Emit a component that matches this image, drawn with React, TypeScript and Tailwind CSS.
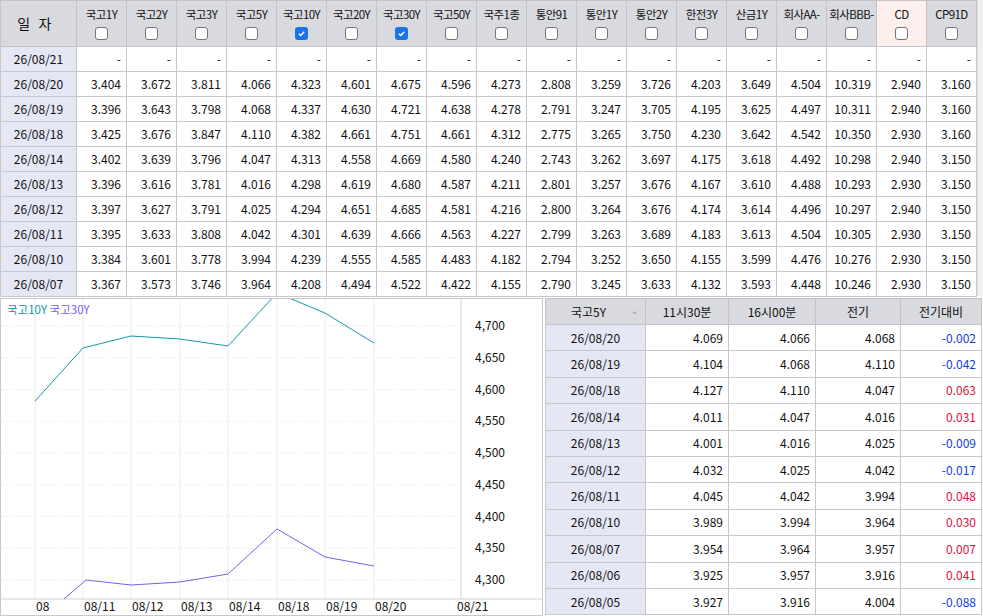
import React from 'react';

const cols = ['국고1Y','국고2Y','국고3Y','국고5Y','국고10Y','국고20Y','국고30Y','국고50Y','국주1종','통안91','통안1Y','통안2Y','한전3Y','산금1Y','회사AA-','회사BBB-','CD','CP91D'];
const checked = [4, 6];

const rows: [string, string[]][] = [
  ['26/08/21', Array(18).fill('-')],
  ['26/08/20', '3.404 3.672 3.811 4.066 4.323 4.601 4.675 4.596 4.273 2.808 3.259 3.726 4.203 3.649 4.504 10.319 2.940 3.160'.split(' ')],
  ['26/08/19', '3.396 3.643 3.798 4.068 4.337 4.630 4.721 4.638 4.278 2.791 3.247 3.705 4.195 3.625 4.497 10.311 2.940 3.160'.split(' ')],
  ['26/08/18', '3.425 3.676 3.847 4.110 4.382 4.661 4.751 4.661 4.312 2.775 3.265 3.750 4.230 3.642 4.542 10.350 2.930 3.160'.split(' ')],
  ['26/08/14', '3.402 3.639 3.796 4.047 4.313 4.558 4.669 4.580 4.240 2.743 3.262 3.697 4.175 3.618 4.492 10.298 2.940 3.150'.split(' ')],
  ['26/08/13', '3.396 3.616 3.781 4.016 4.298 4.619 4.680 4.587 4.211 2.801 3.257 3.676 4.167 3.610 4.488 10.293 2.930 3.150'.split(' ')],
  ['26/08/12', '3.397 3.627 3.791 4.025 4.294 4.651 4.685 4.581 4.216 2.800 3.264 3.676 4.174 3.614 4.496 10.297 2.940 3.150'.split(' ')],
  ['26/08/11', '3.395 3.633 3.808 4.042 4.301 4.639 4.666 4.563 4.227 2.799 3.263 3.689 4.183 3.613 4.504 10.305 2.930 3.150'.split(' ')],
  ['26/08/10', '3.384 3.601 3.778 3.994 4.239 4.555 4.585 4.483 4.182 2.794 3.252 3.650 4.155 3.599 4.476 10.276 2.930 3.150'.split(' ')],
  ['26/08/07', '3.367 3.573 3.746 3.964 4.208 4.494 4.522 4.422 4.155 2.790 3.245 3.633 4.132 3.593 4.448 10.246 2.930 3.150'.split(' ')],
];

const sub: string[][] = [
  ['26/08/20','4.069','4.066','4.068','-0.002'],
  ['26/08/19','4.104','4.068','4.110','-0.042'],
  ['26/08/18','4.127','4.110','4.047','0.063'],
  ['26/08/14','4.011','4.047','4.016','0.031'],
  ['26/08/13','4.001','4.016','4.025','-0.009'],
  ['26/08/12','4.032','4.025','4.042','-0.017'],
  ['26/08/11','4.045','4.042','3.994','0.048'],
  ['26/08/10','3.989','3.994','3.964','0.030'],
  ['26/08/07','3.954','3.964','3.957','0.007'],
  ['26/08/06','3.925','3.957','3.916','0.041'],
  ['26/08/05','3.927','3.916','4.004','-0.088'],
];

const Box = ({ on }: { on: boolean }) =>
  on ? (
    <span className="w-[13px] h-[13px] rounded-[3px] bg-[#1a73e8] flex items-center justify-center">
      <svg viewBox="0 0 10 10" className="w-[9px] h-[9px]"><path d="M2 5.2 4.2 7.2 8 3" fill="none" stroke="white" strokeWidth="1.6" /></svg>
    </span>
  ) : (
    <span className="w-[13px] h-[13px] rounded-[3px] border border-[#767676] bg-white" />
  );

const cyan = [[34,400],[82,347],[130,335],[179,338],[227,345],[276,292],[324,312],[373,342]];
const purple = [[63,598],[85,579],[130,584],[179,581],[227,573],[276,528],[324,556],[373,565]];
const yl = ['4,700','4,650','4,600','4,550','4,500','4,450','4,400','4,350','4,300'];
const xl: [number, string][] = [[34,'08'],[82,'08/11'],[130,'08/12'],[179,'08/13'],[227,'08/14'],[276,'08/18'],[324,'08/19'],[373,'08/20'],[455,'08/21']];
const step = 31.75;

export default function App() {
  return (
    <div className="w-[983px] h-[616px] bg-white overflow-hidden text-[12px] text-[#111]" style={{ fontFamily: '"Noto Sans CJK KR", "DejaVu Sans", sans-serif' }}>
      <div className="flex h-[296px]">
        <table className="border-collapse table-fixed w-[976px]">
          <colgroup><col className="w-[76px]" />{cols.map(c => <col key={c} className="w-[50px]" />)}</colgroup>
          <thead>
            <tr className="h-[46px] bg-[#d9d9e0]">
              <th className="border border-[#c4c4c8] font-normal text-[14px] tracking-[0.6em]">일자</th>
              {cols.map((c, i) => (
                <th key={c} className={`border border-[#c4c4c8] font-normal p-0 align-top ${c === 'CD' ? 'bg-[#fcefec]' : ''}`}>
                  <div className="h-[26px] leading-[26px] text-[11.5px] tracking-tighter whitespace-nowrap">{c}</div>
                  <div className="flex justify-center"><Box on={checked.includes(i)} /></div>
                </th>
              ))}
            </tr>
          </thead>
          <tbody>
            {rows.map(([d, v]) => (
              <tr key={d} className="h-[25px]">
                <td className="border border-[#c8c8cc] bg-[#e5e7f5] text-center">{d}</td>
                {v.map((x, j) => <td key={j} className="border border-[#c8c8cc] text-right pr-[5px]">{x}</td>)}
              </tr>
            ))}
          </tbody>
        </table>
        <div className="flex-1 bg-[#f0f0f0] border-l border-[#ddd]" />
      </div>
      <div className="flex h-[318px] mt-[2px]">
        <div className="w-[543px] h-[318px] border border-[#c8c8c8] relative overflow-hidden">
          <svg width="543" height="318" viewBox="0 298 543 318" className="absolute left-0 top-0">
            {[34,82,130,179,227,276,324,373].map(x => <line key={x} x1={x} y1={298} x2={x} y2={598} stroke="#ececec" />)}
            {yl.map((_, i) => <line key={i} x1={0} y1={325 + i * step} x2={455} y2={325 + i * step} stroke="#e4e4e4" strokeDasharray="1 2" />)}
            <line x1={460} y1={298} x2={460} y2={598} stroke="#d0d0d0" />
            <line x1={0} y1={598} x2={543} y2={598} stroke="#d0d0d0" />
            <polyline points={cyan.map(p => p.join(',')).join(' ')} fill="none" stroke="#1597a8" />
            <polyline points={purple.map(p => p.join(',')).join(' ')} fill="none" stroke="#7b5cf0" />
            {yl.map((t, i) => <text key={t} x={474} y={329 + i * step} fontSize="12" fill="#111">{t}</text>)}
            {xl.map(([x, t]) => <text key={t} x={x + 1} y={610} fontSize="12" fill="#111">{t}</text>)}
          </svg>
          <div className="absolute left-[6px] top-[2px] text-[11.5px] leading-[16px]">
            <span className="text-[#1597a8]">국고10Y</span> <span className="text-[#7b5cf0]">국고30Y</span>
          </div>
        </div>
        <div className="w-[2px]" />
        <table className="border-collapse table-fixed w-[436px] h-fit">
          <colgroup><col className="w-[100px]" /><col className="w-[83px]" /><col className="w-[87px]" /><col className="w-[85px]" /><col className="w-[81px]" /></colgroup>
          <thead>
            <tr className="h-[26px] bg-[#d9d9e0]">
              <th className="border border-[#c4c4c8] font-normal text-left pl-[25px] relative">국고5Y<span className="absolute right-[6px] top-[3px] text-[#999] text-[10px]">⌄</span></th>
              {['11시30분','16시00분','전기','전기대비'].map(h => <th key={h} className="border border-[#c4c4c8] font-normal">{h}</th>)}
            </tr>
          </thead>
          <tbody>
            {sub.map(r => (
              <tr key={r[0]} className="h-[26.4px]">
                <td className="border border-[#c8c8cc] bg-[#e5e7f5] text-center">{r[0]}</td>
                {r.slice(1).map((x, j) => (
                  <td key={j} className={`border border-[#c8c8cc] text-right pr-[5px] ${j === 3 ? (x.startsWith('-') ? 'text-[#1040e0]' : 'text-[#e0103a]') : ''}`}>{x}</td>
                ))}
              </tr>
            ))}
          </tbody>
        </table>
      </div>
    </div>
  );
}
